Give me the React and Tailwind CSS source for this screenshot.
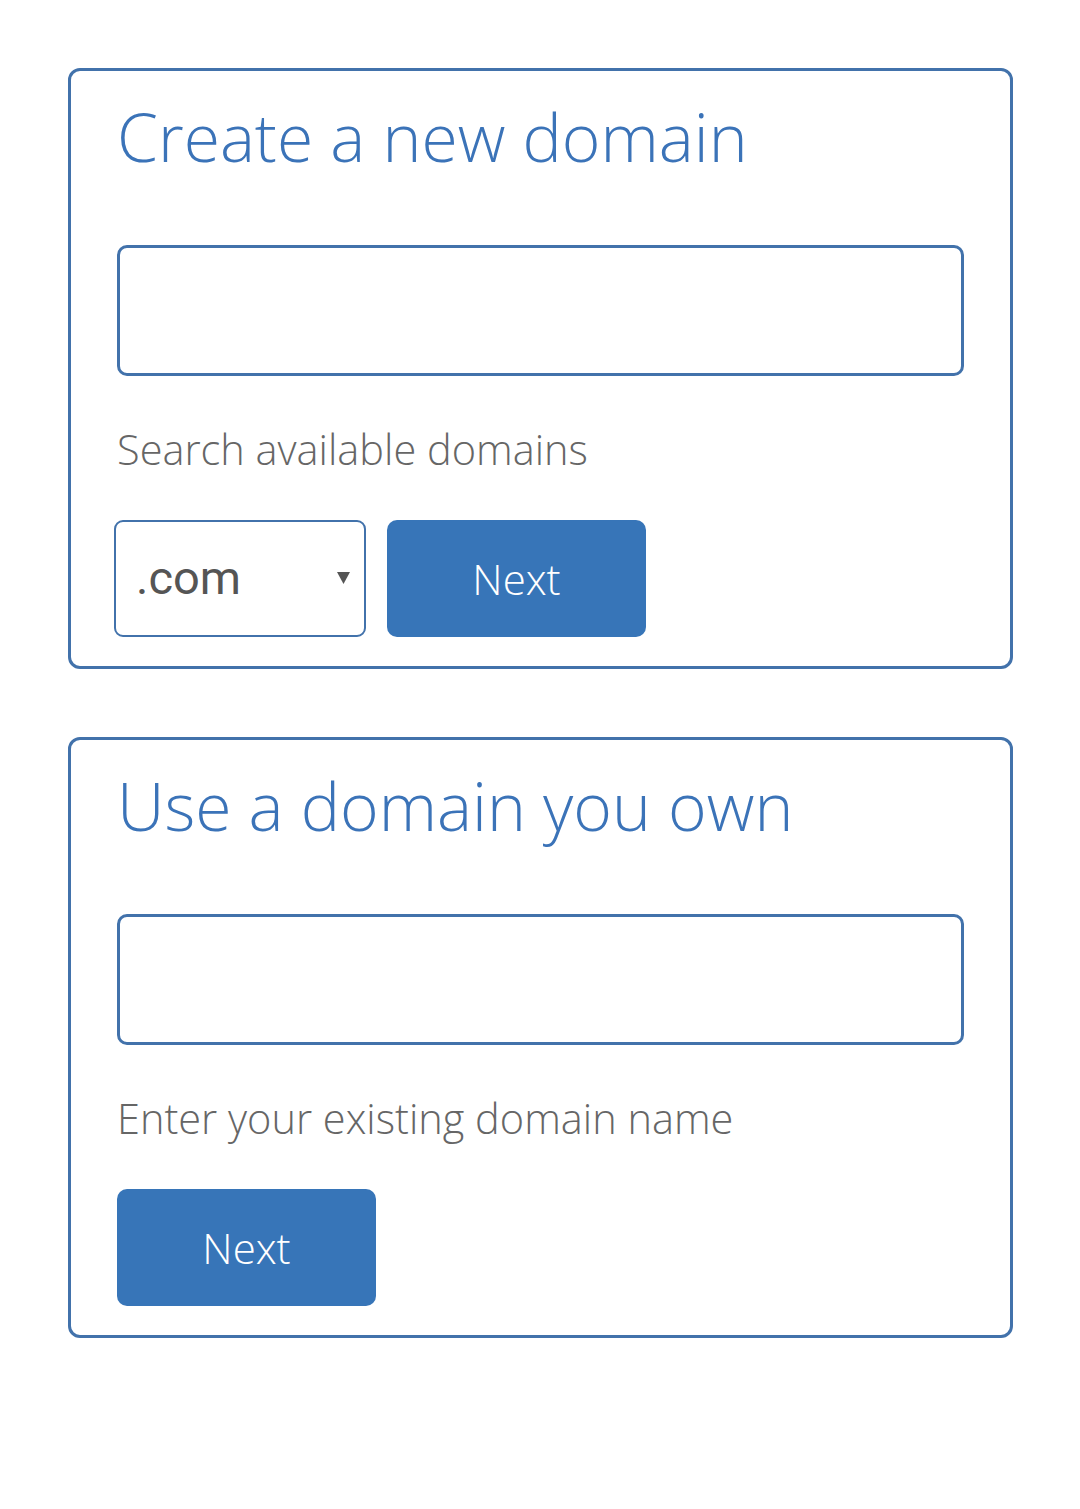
import React from 'react';

const NextButton = ({ className = '' }) => (
  <button
    type="button"
    className={`h-[117px] w-[259px] rounded-[10px] bg-[#3775b8] text-[42px] font-light text-white ${className}`}
  >
    Next
  </button>
);

const Card = ({ title, hint, children }) => (
  <section className="rounded-[12px] border-[3px] border-[#4272ab] px-[46px] pt-[26px] pb-[29px]">
    <h2 className="text-[66px] font-light leading-[1.2] text-[#3b73b8]">{title}</h2>
    <input
      type="text"
      className="mt-[69px] block h-[131px] w-[847px] rounded-[10px] border-[3px] border-[#4272ab] bg-white px-5 text-[40px] outline-none"
    />
    <p className="mt-[49px] text-[41.5px] font-light leading-[1.2] text-[#666666]">{hint}</p>
    <div className="mt-[45px] flex items-center">{children}</div>
  </section>
);

export default function App() {
  return (
    <div
      className="min-h-[1509px] w-[1080px] bg-white pt-[68px] pl-[68px]"
      style={{ fontFamily: '"Open Sans", "Liberation Sans", sans-serif' }}
    >
      <div className="flex w-[945px] flex-col gap-[68px]">
        {/* Register a new domain */}
        <Card title="Create a new domain" hint="Search available domains">
          <div className="relative -ml-[3px] h-[117px] w-[252px]">
            <select
              defaultValue=".com"
              className="h-full w-full appearance-none rounded-[9px] border-[2px] border-[#4272ab] bg-white pl-[20px] text-[47px] text-[#555555] outline-none"
              style={{ fontFamily: 'Roboto, "Liberation Sans", sans-serif' }}
            >
              <option value=".com">.com</option>
              <option value=".net">.net</option>
              <option value=".org">.org</option>
            </select>
            <svg
              className="pointer-events-none absolute right-[16px] top-[51px]"
              width="13"
              height="13"
              viewBox="0 0 13 13"
            >
              <path d="M0 1h13L6.5 13z" fill="#555555" />
            </svg>
          </div>
          <NextButton className="ml-[21px]" />
        </Card>

        {/* Transfer an existing domain */}
        <Card title="Use a domain you own" hint="Enter your existing domain name">
          <NextButton />
        </Card>
      </div>
    </div>
  );
}
